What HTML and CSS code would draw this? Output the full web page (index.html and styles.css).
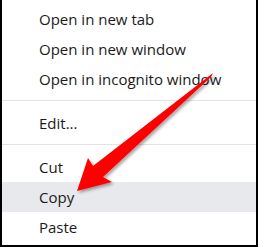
FILE: index.html
```html
<!DOCTYPE html>
<html lang="en">

<head>
    <meta charset="UTF-8" />
    <meta name="viewport" content="width=device-width, initial-scale=1.0" />
    <title>Context Menu</title>
    <link rel="stylesheet" href="styles.css">
</head>

<body>
    <div class="menu">
        <div class="item">Open in new tab</div>
        <div class="item">Open in new window</div>
        <div class="item">Open in incognito window</div>
        <div class="sep"></div>
        <div class="item">Edit...</div>
        <div class="sep"></div>
        <div class="item">Cut</div>
        <div class="item active">Copy</div>
        <div class="item">Paste</div>

        <svg class="arrow" width="258" height="247" viewBox="0 0 258 247">
            <defs>
                <filter id="shadow" x="-20%" y="-20%" width="140%" height="140%">
                    <feDropShadow dx="2" dy="2" stdDeviation="1.5" flood-color="#000" flood-opacity="0.35" />
                </filter>
            </defs>
            <polygon filter="url(#shadow)" fill="#ff0000"
                points="213,73 211,77 103,177 112,182 77,191 88,158 93,166" />
        </svg>
    </div>
</body>

</html>
```

FILE: styles.css
```css
* {
    box-sizing: border-box;
}

body {
    margin: 0;
    background: #fff;
    font-family: 'Open Sans', 'Noto Sans', sans-serif;
}

.menu {
    position: relative;
    width: 258px;
    height: 247px;
    padding-top: 4px;
    background: #fff;
    border: 2px solid #000;
    border-top: none;
}

.item {
    height: 30px;
    padding-left: 37px;
    display: flex;
    align-items: center;
    font-size: 15px;
    color: #1a1a1a;
}

.item.active {
    background-color: #e8e9ec;
}

.sep {
    height: 1px;
    margin: 6px 0 7px;
    background-color: #e3e3e6;
}

.arrow {
    position: absolute;
    top: 0;
    left: -2px;
    pointer-events: none;
}
```
